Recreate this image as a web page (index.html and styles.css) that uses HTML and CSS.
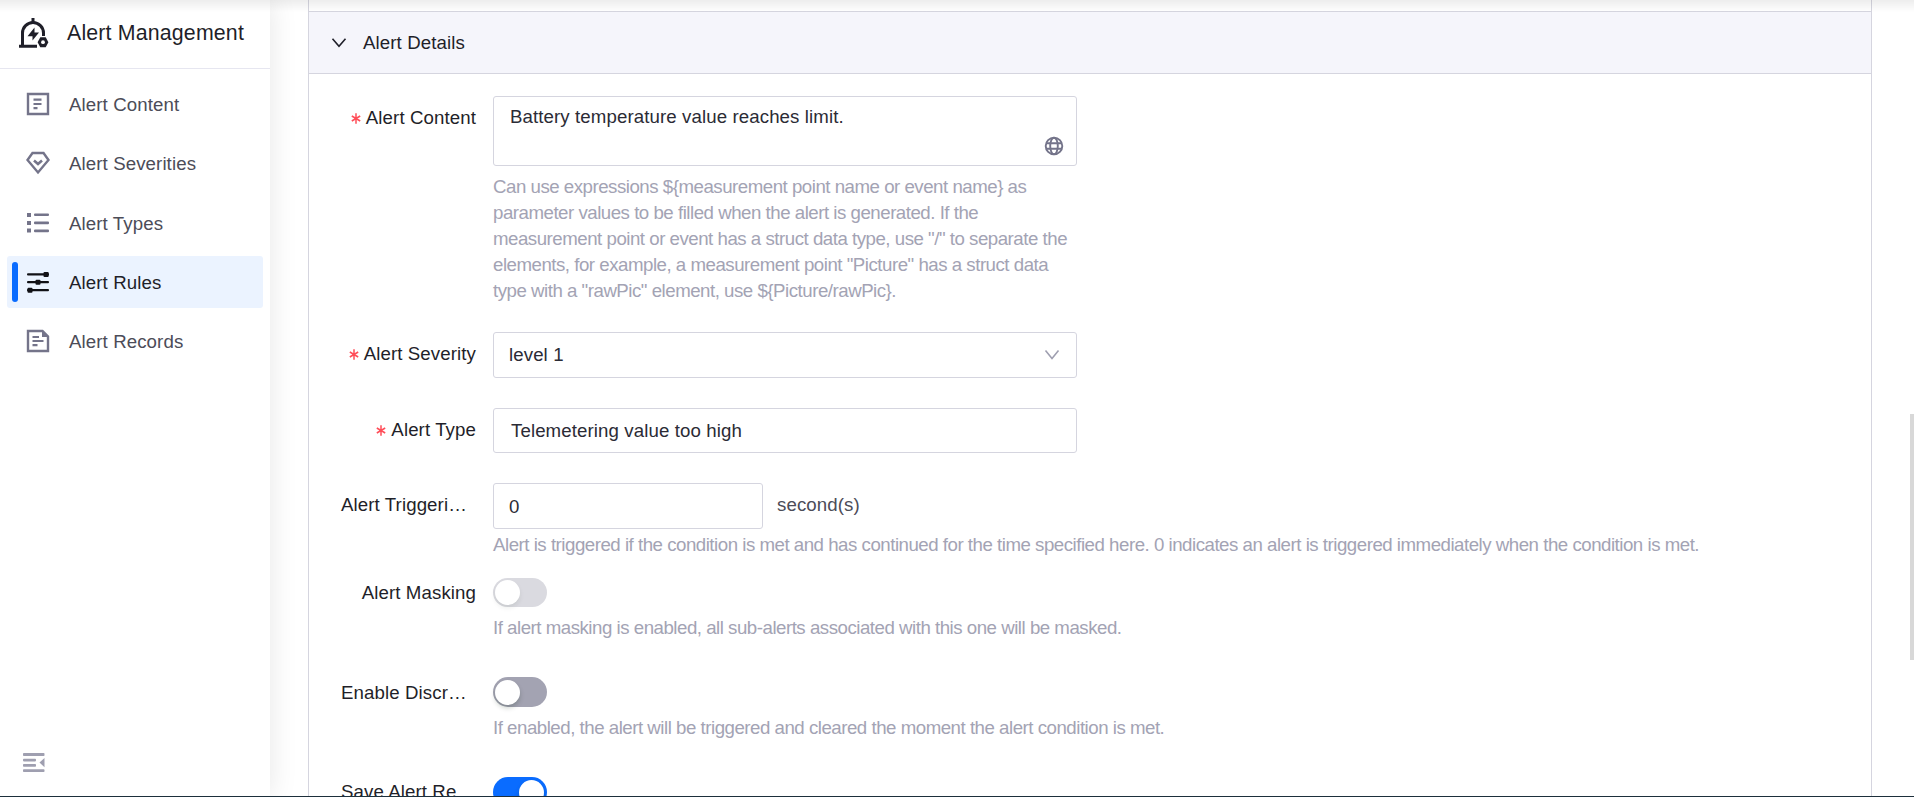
FILE: index.html
```html
<!DOCTYPE html>
<html lang="en">
<head>
<meta charset="utf-8">
<title>Alert Management</title>
<link rel="stylesheet" href="styles.css">
</head>
<body>
<div class="app">
  <aside class="sidebar">
    <header class="brand">
      <svg class="brand-icon" width="30" height="32" viewBox="0 0 30 32" fill="none" stroke="#1f1f29" stroke-width="3">
        <path d="M14 5V1"/>
        <path d="M0 29.300h18M3.500 28V16a10.500 10.500 0 0 1 21 0v3"/>
        <path d="M15.500 10.500L8.500 19.300h5V23.500l6.500-8h-4.500z" fill="#1f1f29" stroke="none"/>
        <path d="M21.300 20.200h5.400l2.700 5-2.700 5h-5.400l-2.700-5z" fill="#1f1f29" stroke="none"/>
        <circle cx="24" cy="25.200" r="1.900" fill="#fff" stroke="none"/>
      </svg>
      <h1 class="brand-title">Alert Management</h1>
    </header>
    <nav class="menu">
      <a class="item">
        <svg class="icon" width="24" height="24" viewBox="0 0 24 24" fill="none" stroke="currentColor" stroke-width="2.400"><path d="M2 2h20v20H2z"/><path d="M7.500 7.600h8M7.500 12h8M7.500 16.200h4" stroke-width="2.200"/></svg>
        <span>Alert Content</span>
      </a>
      <a class="item">
        <svg class="icon" width="24" height="24" viewBox="0 0 24 24" fill="none" stroke="currentColor" stroke-width="2.400"><path d="M6.500 2h11l5 7L12 21.500 1.500 9z"/><path d="M8 9.500l4 3.500 4-3.500" stroke-width="2.600"/></svg>
        <span>Alert Severities</span>
      </a>
      <a class="item">
        <svg class="icon" width="24" height="24" viewBox="0 0 24 24" fill="currentColor"><path d="M1 2h4v4H1zM1 10h4v4H1zM1 17.500h4v4H1z"/><rect x="8" y="2.500" width="15" height="2.600" rx="1"/><rect x="8" y="10.600" width="15" height="2.600" rx="1"/><rect x="8" y="18.600" width="15" height="2.600" rx="1"/></svg>
        <span>Alert Types</span>
      </a>
      <a class="item active">
        <svg class="icon" width="24" height="24" viewBox="0 0 24 24" fill="currentColor"><rect x="1" y="3.200" width="22" height="2.300" rx="1"/><rect x="1" y="11" width="22" height="2.300" rx="1"/><rect x="1" y="19" width="22" height="2.300" rx="1"/><rect x="17.500" y="2" width="5.200" height="5" rx="1"/><rect x="9.500" y="9.700" width="5" height="5" rx="1"/><rect x="1.500" y="17.700" width="5" height="5" rx="1"/></svg>
        <span>Alert Rules</span>
      </a>
      <a class="item">
        <svg class="icon" width="24" height="24" viewBox="0 0 24 24" fill="none" stroke="currentColor" stroke-width="2.400"><path d="M2 2h14.500L22 7.500V22H2z"/><path d="M16 2v6h6z" fill="currentColor" stroke="none"/><path d="M6.500 8h6.500M6.500 12h11M6.500 16.200h5" stroke-width="2.200"/></svg>
        <span>Alert Records</span>
      </a>
    </nav>
    <svg class="collapse" width="24" height="20" viewBox="0 0 24 20" fill="#9f9fb0"><rect x="1" y="0" width="21.500" height="3" rx=".8"/><rect x="1" y="5.700" width="13" height="2.700" rx=".8"/><rect x="1" y="11" width="13" height="2.700" rx=".8"/><rect x="1" y="16.300" width="21.500" height="2.700" rx=".8"/><path d="M22.500 5v9.200L17.500 9.600z"/></svg>
  </aside>

  <main class="main">
    <section class="panel">
      <header class="panel-head">
        <svg width="16" height="12" viewBox="0 0 16 12" fill="none" stroke="#1f1f29" stroke-width="1.600"><path d="M1.500 1.800L8 9.300l6.500-7.500"/></svg>
        <h2 class="panel-title">Alert Details</h2>
      </header>
      <form class="form">
        <div class="row row-content">
          <label class="label"><svg class="req" viewBox="0 0 10 11"><path d="M5 .3v10.400M.8 3l8.400 5M9.200 3L.8 8"/></svg>Alert Content</label>
          <div class="control">
            <div class="box area"><span>Battery temperature value reaches limit.</span>
              <svg class="globe" width="20" height="20" viewBox="0 0 20 20" fill="none" stroke="#74748a" stroke-width="1.900"><circle cx="10" cy="10" r="8.300"/><ellipse cx="10" cy="10" rx="3.800" ry="8.300"/><path d="M2 7.200h16M2 12.800h16"/></svg>
            </div>
            <p class="hint">Can use expressions ${measurement point name or event name} as<br>parameter values to be filled when the alert is generated. If the<br>measurement point or event has a struct data type, use "/" to separate the<br>elements, for example, a measurement point "Picture" has a struct data<br>type with a "rawPic" element, use ${Picture/rawPic}.</p>
          </div>
        </div>
        <div class="row row-severity">
          <label class="label"><svg class="req" viewBox="0 0 10 11"><path d="M5 .3v10.400M.8 3l8.400 5M9.200 3L.8 8"/></svg>Alert Severity</label>
          <div class="control">
            <div class="box select"><span>level 1</span>
              <svg width="16" height="12" viewBox="0 0 16 12" fill="none" stroke="#9f9fb0" stroke-width="1.600"><path d="M1.500 1.500L8 9.500l6.500-8"/></svg>
            </div>
          </div>
        </div>
        <div class="row row-type">
          <label class="label"><svg class="req" viewBox="0 0 10 11"><path d="M5 .3v10.400M.8 3l8.400 5M9.200 3L.8 8"/></svg>Alert Type</label>
          <div class="control"><div class="box input">Telemetering value too high</div></div>
        </div>
        <div class="row row-trigger">
          <label class="label cut">Alert Triggeri…</label>
          <div class="control">
            <div class="inline"><div class="box number">0</div><span class="unit">second(s)</span></div>
            <p class="hint">Alert is triggered if the condition is met and has continued for the time specified here. 0 indicates an alert is triggered immediately when the condition is met.</p>
          </div>
        </div>
        <div class="row row-mask">
          <label class="label">Alert Masking</label>
          <div class="control"><span class="switch disabled"></span>
            <p class="hint">If alert masking is enabled, all sub-alerts associated with this one will be masked.</p></div>
        </div>
        <div class="row row-discrete">
          <label class="label cut">Enable Discr…</label>
          <div class="control"><span class="switch"></span>
            <p class="hint">If enabled, the alert will be triggered and cleared the moment the alert condition is met.</p></div>
        </div>
        <div class="row row-save">
          <label class="label cut">Save Alert Re…</label>
          <div class="control"><span class="switch on"></span></div>
        </div>
      </form>
    </section>
  </main>
  <div class="top-shade"></div>
  <div class="scroll-thumb"></div>
  <div class="bottom-line"></div>
</div>
</body>
</html>
```
FILE: styles.css
```css
* { box-sizing: border-box; }

body {
  margin: 0;
  font-family: "Liberation Sans", Arial, sans-serif;
  font-size: 18.67px;
  color: #1f1f29;
  background: #fff;
}

h1, h2, p { margin: 0; font-weight: 400; }

.app {
  position: relative;
  display: flex;
  width: 1914px;
  height: 797px;
  overflow: hidden;
}

/* Sidebar */
.sidebar {
  display: flex;
  flex-direction: column;
  flex: none;
  width: 270px;
  background: #fff;
  box-shadow: 0 0 27px rgba(0, 0, 0, .1);
  z-index: 1;
}

.brand {
  display: flex;
  align-items: center;
  height: 69px;
  padding: 0 0 3px 19px;
  border-bottom: 1px solid #e6e6f0;
}

.brand-icon { flex: none; }

.brand-title {
  margin: 0 0 0 18px;
  font-size: 21.33px;
  line-height: 28px;
  letter-spacing: .17px;
  white-space: nowrap;
}

.menu {
  display: flex;
  flex-direction: column;
  gap: 7.33px;
  padding: 9px 7px 0;
}

.item {
  position: relative;
  display: flex;
  align-items: center;
  height: 52px;
  padding-left: 19px;
  border-radius: 3px;
  color: #4c4c58;
  letter-spacing: .1px;
}

.item span { padding-top: 2px; }

.icon { margin-right: 19px; color: #74748a; flex: none; }

.item.active { background: #ebf3ff; color: #1f1f29; }
.item.active .icon { color: #111116; }

.item.active::before {
  content: "";
  position: absolute;
  left: 5px;
  top: 6px;
  width: 6px;
  height: 40px;
  border-radius: 3px;
  background: #0a6cff;
}

.collapse { margin: auto 0 24px 22px; }

/* Main panel */
.main { flex: none; width: 1644px; padding-left: 38px; }

.panel {
  width: 1564px;
  height: 797px;
  padding-top: 11px;
  border: solid #d5d5df;
  border-width: 0 1px;
}

.panel-head {
  display: flex;
  align-items: center;
  gap: 16px;
  height: 63px;
  padding-left: 22px;
  border: solid #d5d5df;
  border-width: 1px 0;
  background: #f5f5fb;
}

.panel-title { font-size: inherit; letter-spacing: .1px; }

.form { padding: 22px 0 0 32px; }

.row { display: flex; gap: 17px; }
.row-content { height: 236px; }
.row-severity { height: 76px; }
.row-type { height: 75px; }
.row-trigger { height: 95px; }
.row-mask { height: 99px; }
.row-discrete { height: 100px; }

.label {
  display: flex;
  align-items: center;
  justify-content: flex-end;
  flex: none;
  width: 135px;
  height: 44px;
  letter-spacing: .1px;
  white-space: nowrap;
}

.label.cut { justify-content: flex-start; }
.row-mask .label, .row-save .label { height: 30px; }
.row-discrete .label { height: 32px; }

.req {
  width: 10px;
  height: 11px;
  margin-right: 5px;
  fill: none;
  stroke: #ff4d58;
  stroke-width: 1.5;
}

.box {
  display: flex;
  align-items: center;
  width: 584px;
  height: 46px;
  padding-left: 15px;
  border: 1px solid #d5d5df;
  border-radius: 3px;
  color: #2b2b35;
  letter-spacing: .1px;
}

.area {
  position: relative;
  align-items: flex-start;
  height: 70px;
  padding: 9px 0 0 16px;
}

.globe { position: absolute; right: 12px; bottom: 9px; }
.select { justify-content: space-between; padding-right: 16px; }
.input { height: 45px; padding-left: 17px; }
.number { width: 270px; padding-top: 2px; }
.inline { display: flex; gap: 14px; }
.unit { line-height: 44px; color: #4c4c58; letter-spacing: .1px; }

.hint {
  color: #a3a3b4;
  font-size: 18.67px;
  line-height: 26px;
  letter-spacing: -.48px;
  white-space: nowrap;
}

.row-content .hint { margin-top: 8px; }
.row-trigger .hint { margin-top: 3px; }

/* Switches */
.switch {
  display: flex;
  align-items: center;
  width: 54px;
  height: 30px;
  padding: 0 2px;
  border-radius: 15px;
  background: #a3a3b2;
}

.switch::before {
  content: "";
  width: 25px;
  height: 25px;
  border-radius: 50%;
  background: #fff;
  box-shadow: 0 3px 5px rgba(0, 35, 11, .2);
}

.switch.on { justify-content: flex-end; padding: 0 3px; background: #0a6cff; }
.switch.disabled { height: 29px; background: #dadae0; }
.switch.disabled::before { box-shadow: 0 3px 5px rgba(0, 35, 11, .08); }
.row-mask .hint, .row-discrete .hint { margin-top: 8px; }

/* Overlays at the window edges */
.top-shade {
  position: absolute;
  inset: 0 0 auto;
  height: 12px;
  background: linear-gradient(rgba(0, 0, 0, .07), rgba(0, 0, 0, 0));
  z-index: 2;
}

.scroll-thumb {
  position: absolute;
  top: 414px;
  right: 0;
  width: 4px;
  height: 246px;
  background: #d8d8d8;
}

.bottom-line {
  position: absolute;
  inset: auto 0 0;
  height: 1px;
  background: #1d2f3b;
  z-index: 3;
}
```
